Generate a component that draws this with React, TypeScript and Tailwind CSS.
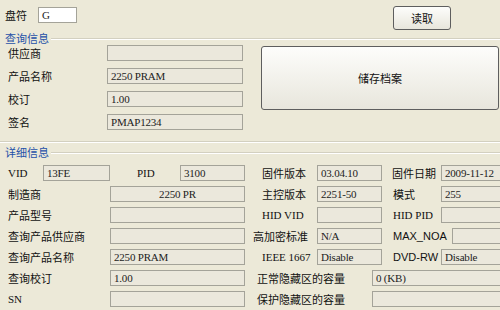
import React from 'react';

const cjk = "font-['Noto_Sans_CJK_SC','Noto_Sans',sans-serif]";
const serif = "font-['Liberation_Serif','Noto_Sans_CJK_SC',serif]";

type FieldProps = { value?: string; w: string; center?: boolean; white?: boolean };

const Field: React.FC<FieldProps> = ({ value = '', w, center, white }) => (
  <div
    className={`h-[16px] shrink-0 border border-[#a4a399] ${white ? 'bg-white' : 'bg-[#ebe8dc]'} ${w} ${center ? 'justify-center' : 'pl-[3px]'} flex items-center overflow-hidden whitespace-nowrap text-[11px] leading-none tracking-[-0.2px] text-[#222] ${serif}`}
  >
    {value}
  </div>
);

type LabelProps = { text?: string; w: string; pl?: string; latin?: boolean; sans?: boolean };

const Label: React.FC<LabelProps> = ({ text = '', w, pl = '', latin, sans }) => (
  <div
    className={`shrink-0 ${w} ${pl} whitespace-nowrap text-[11px] leading-none text-[#111] ${latin ? serif : sans ? "font-['Liberation_Sans',sans-serif]" : cjk}`}
  >
    {text}
  </div>
);

const Divider: React.FC<{ title: string }> = ({ title }) => (
  <div className="flex h-[13px] items-center pl-[5px]">
    <span className={`text-[11px] leading-none text-[#1f51a8] ${cjk}`}>{title}</span>
    <div className="ml-[2px] h-[2px] flex-1 border-t border-b border-t-[#d3d0c0] border-b-white" />
  </div>
);

const Btn: React.FC<{ text: string; className: string }> = ({ text, className }) => (
  <button
    className={`flex items-center justify-center rounded-[3px] border border-[#5e5e5e] bg-gradient-to-b from-[#fdfdfb] to-[#e8e6dc] text-[11px] text-[#111] ${cjk} ${className}`}
  >
    {text}
  </button>
);

type Side = { label?: string; value?: string };

// right-hand pair of label/field columns in the detail section
const RightPair: React.FC<{ a: Side; b: Side; apl?: string; bw?: string; bpl?: string; latinA?: boolean; latinB?: boolean; sansB?: boolean }> = ({
  a, b, apl = 'pl-[12px]', bw = 'w-[59px]', bpl = 'pl-[11px]', latinA, latinB, sansB,
}) => (
  <div className="flex items-center">
    <Label text={a.label} w="w-[67px]" pl={apl} latin={latinA} />
    <Field value={a.value} w="w-[65px]" />
    <Label text={b.label} w={bw} pl={bpl} latin={latinB} sans={sansB} />
    <Field value={b.value} w="w-[80px]" />
  </div>
);

const WideRight: React.FC<{ label?: string; value?: string }> = ({ label, value }) => (
  <div className="flex items-center">
    <Label text={label} w="w-[122px]" pl="pl-[7px]" />
    <Field value={value} w="w-[130px]" />
  </div>
);

const LeftRow: React.FC<{ label?: string; value?: string; center?: boolean; latin?: boolean }> = ({ label, value, center, latin }) => (
  <div className="flex w-[250px] shrink-0 items-center pl-[8px]">
    <Label text={label} w="w-[102px]" latin={latin} />
    <Field value={value} w="w-[135px]" center={center} />
  </div>
);

export default function App() {
  const queryRows = [
    { label: '供应商', value: '' },
    { label: '产品名称', value: '2250 PRAM' },
    { label: '校订', value: '1.00' },
    { label: '签名', value: 'PMAP1234' },
  ];

  return (
    <div className="h-[310px] w-[500px] overflow-hidden bg-[#ece9d8]">
      {/* drive letter row */}
      <div className="flex h-[30px] items-start pt-[6px]">
        <div className="flex items-center pl-[5px] pt-[1px]">
          <Label text="盘符" w="w-[33px]" />
          <Field value="G" w="w-[39px]" white />
        </div>
        <Btn text="读取" className="ml-auto mr-[49px] h-[24px] w-[58px]" />
      </div>

      <div className="mt-[2px]">
        <Divider title="查询信息" />
      </div>

      <div className="flex">
        <div className="flex w-[250px] flex-col gap-[6px]">
          {queryRows.map((r) => (
            <div key={r.label} className="flex h-[17px] items-center pl-[8px]">
              <Label text={r.label} w="w-[99px]" />
              <div className="h-[17px]">
                <Field value={r.value} w="w-[136px]" />
              </div>
            </div>
          ))}
        </div>
        <Btn text="储存档案" className="ml-[11px] mt-[1px] h-[64px] w-[238px] border-[#4a4a4a]" />
      </div>

      <div className="mt-[10px] h-[2px] border-t border-b border-t-[#d3d0c0] border-b-white" />

      <div className="mt-[3px]">
        <Divider title="详细信息" />
      </div>

      <div className="mt-[6px] flex flex-col gap-[5px]">
        <div className="flex items-center">
          <div className="flex w-[250px] shrink-0 items-center pl-[8px]">
            <Label text="VID" w="w-[35px]" latin />
            <Field value="13FE" w="w-[67px]" />
            <Label text="PID" w="w-[70px]" pl="pl-[27px]" latin />
            <Field value="3100" w="w-[65px]" />
          </div>
          <RightPair a={{ label: '固件版本', value: '03.04.10' }} b={{ label: '固件日期', value: '2009-11-12' }} bpl="pl-[10px]" />
        </div>
        <div className="flex items-center">
          <LeftRow label="制造商" value="2250 PR" center />
          <RightPair a={{ label: '主控版本', value: '2251-50' }} b={{ label: '模式', value: '255' }} />
        </div>
        <div className="flex items-center">
          <LeftRow label="产品型号" />
          <RightPair a={{ label: 'HID VID' }} b={{ label: 'HID PID' }} latinA latinB />
        </div>
        <div className="flex items-center">
          <LeftRow label="查询产品供应商" />
          <RightPair
            a={{ label: '高加密标准', value: 'N/A' }}
            b={{ label: 'MAX_NOA' }}
            apl="pl-[3px]"
            bw="w-[70px]"
            sansB
          />
        </div>
        <div className="flex items-center">
          <LeftRow label="查询产品名称" value="2250 PRAM" />
          <RightPair a={{ label: 'IEEE 1667', value: 'Disable' }} b={{ label: 'DVD-RW', value: 'Disable' }} latinA sansB />
        </div>
        <div className="flex items-center">
          <LeftRow label="查询校订" value="1.00" />
          <WideRight label="正常隐藏区的容量" value="0 (KB)" />
        </div>
        <div className="flex items-center">
          <LeftRow label="SN" latin />
          <WideRight label="保护隐藏区的容量" />
        </div>
        <div className="flex items-center">
          <LeftRow />
          <WideRight />
        </div>
      </div>
    </div>
  );
}
